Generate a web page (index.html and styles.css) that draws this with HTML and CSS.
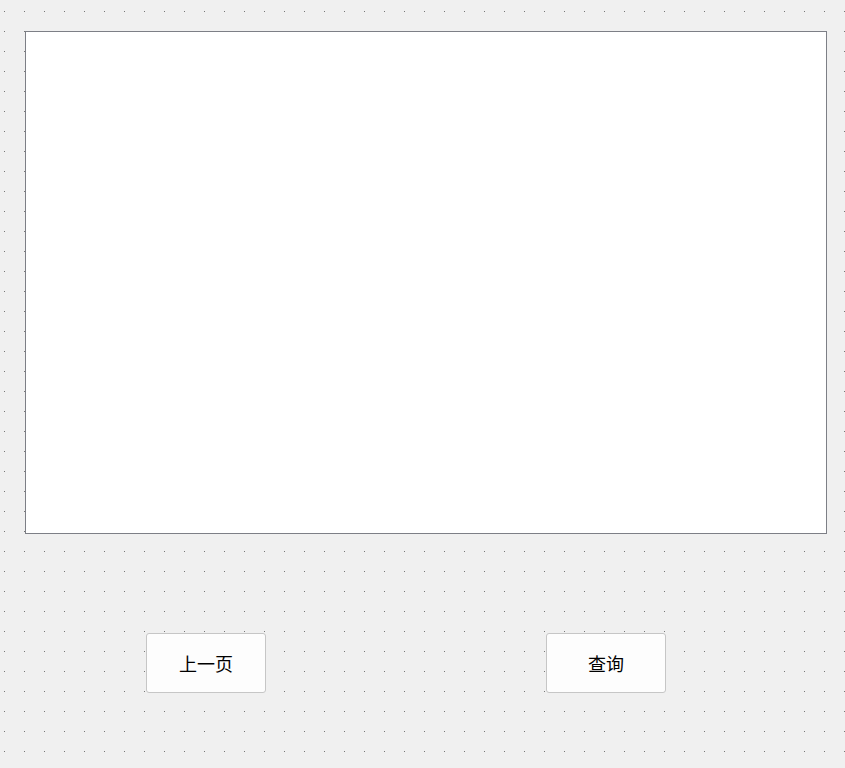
FILE: index.html
```html
<!DOCTYPE html>
<html lang="zh-CN">
<head>
    <meta charset="UTF-8">
    <meta name="viewport" content="width=device-width, initial-scale=1.0">
    <title>Form</title>
    <link rel="stylesheet" href="styles.css">
</head>
<body>
    <div class="form">
        <div class="view"></div>

        <div class="buttons">
            <button class="btn">上一页</button>
            <button class="btn">查询</button>
        </div>
    </div>
</body>
</html>
```

FILE: styles.css
```css
html, body {
    height: 100%;
}
body {
    margin: 0;
    padding: 0;
    font-family: "Noto Sans CJK SC", "Noto Sans", sans-serif;
    background-color: #f0f0f0;
    background-image: conic-gradient(at 1px 1px, transparent 270deg, #777 0);
    background-size: 20px 20px;
    background-position: 4px 11px;
}
.form {
    padding: 31px 0 0 25px;
}
.view {
    width: 800px;
    height: 501px;
    background: #fff;
    border: 1px solid #7d7f86;
}
.buttons {
    display: flex;
    gap: 280px;
    margin-top: 99px;
    padding-left: 121px;
}
.btn {
    width: 120px;
    height: 60px;
    padding: 0;
    border: 1px solid #c6c6c6;
    border-radius: 3px;
    background: #fdfdfd;
    color: #000;
    font-family: "Noto Sans CJK SC", sans-serif;
    font-size: 18px;
}
```
